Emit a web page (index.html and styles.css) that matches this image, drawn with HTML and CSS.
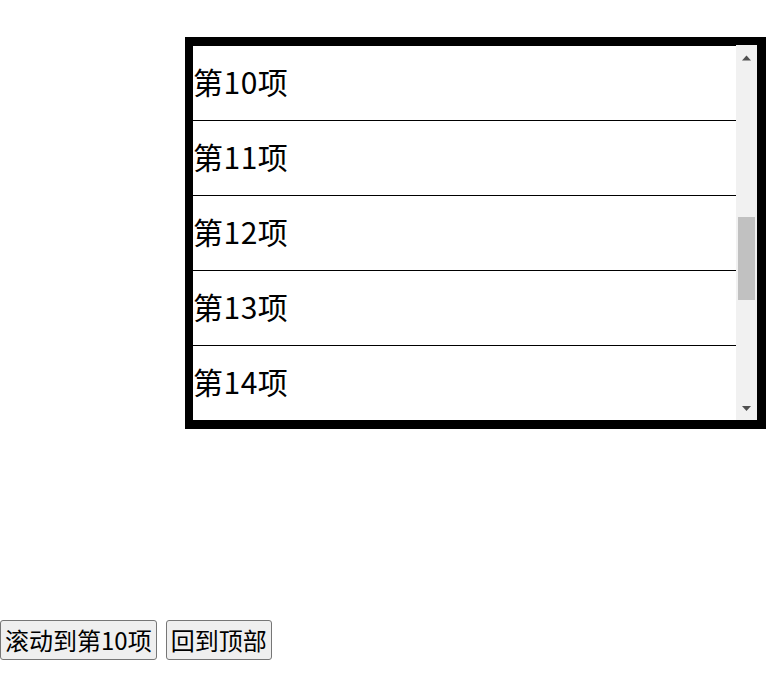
FILE: index.html
```html
<!DOCTYPE html>
<html lang="zh-CN">
<head>
<meta charset="utf-8">
<title>滚动列表</title>
<link rel="stylesheet" href="styles.css">
</head>
<body>
<div class="scroller">
  <ul class="list" id="list">
    <li class="item">第1项</li>
    <li class="item">第2项</li>
    <li class="item">第3项</li>
    <li class="item">第4项</li>
    <li class="item">第5项</li>
    <li class="item">第6项</li>
    <li class="item">第7项</li>
    <li class="item">第8项</li>
    <li class="item">第9项</li>
    <li class="item">第10项</li>
    <li class="item">第11项</li>
    <li class="item">第12项</li>
    <li class="item">第13项</li>
    <li class="item">第14项</li>
    <li class="item">第15项</li>
    <li class="item">第16项</li>
    <li class="item">第17项</li>
    <li class="item">第18项</li>
    <li class="item">第19项</li>
    <li class="item">第20项</li>
  </ul>
  <div class="scrollbar">
    <div class="sb-btn">
      <svg width="21" height="22" viewBox="0 0 21 22"><polygon points="6,15.5 15,15.5 10.5,10.5" fill="#505050"/></svg>
    </div>
    <div class="sb-track">
      <div class="sb-thumb" style="margin-top:150px;height:83px"></div>
    </div>
    <div class="sb-btn">
      <svg width="21" height="22" viewBox="0 0 21 22"><polygon points="6,8 15,8 10.5,13" fill="#505050"/></svg>
    </div>
  </div>
</div>
<div class="actions">
  <button class="btn" type="button">滚动到第10项</button>
  <button class="btn" type="button">回到顶部</button>
</div>
<script src="script.js"></script>
</body>
</html>
```

FILE: styles.css
```css
html, body {
  margin: 0;
  padding: 0;
  background: #fff;
}

body {
  font-family: "Noto Sans CJK SC", "Noto Sans", sans-serif;
  color: #000;
}

.scroller {
  display: flex;
  width: 564px;
  height: 375px;
  margin: 37px 0 0 185px;
  border-style: solid;
  border-color: #000;
  border-width: 8px 9px 9px 8px;
}

.list {
  flex: 1;
  margin: 0;
  padding: 0;
  list-style: none;
  overflow: hidden;
}

.item {
  box-sizing: border-box;
  height: 75px;
  line-height: 70px;
  border-bottom: 1px solid #000;
  font-size: 30px;
  letter-spacing: 0.5px;
  white-space: nowrap;
}

.scrollbar {
  width: 21px;
  display: flex;
  flex-direction: column;
  background: #f1f1f1;
}

.sb-btn {
  height: 22px;
  flex: none;
}

.sb-btn svg {
  display: block;
}

.sb-track {
  flex: 1;
}

.sb-thumb {
  width: 17px;
  margin-left: 2px;
  background: #c1c1c1;
}

.actions {
  display: flex;
  gap: 9px;
  margin-top: 191px;
}

.btn {
  font-family: "Noto Sans CJK SC", "Noto Sans", sans-serif;
  font-size: 24px;
  line-height: 36px;
  height: 40px;
  padding: 1px 4px;
  margin: 0;
  background: #efefef;
  border: 1px solid #767676;
  border-radius: 3px;
  color: #000;
}
```

FILE: script.js
```js
document.getElementById('list').scrollTop = 674;
```
